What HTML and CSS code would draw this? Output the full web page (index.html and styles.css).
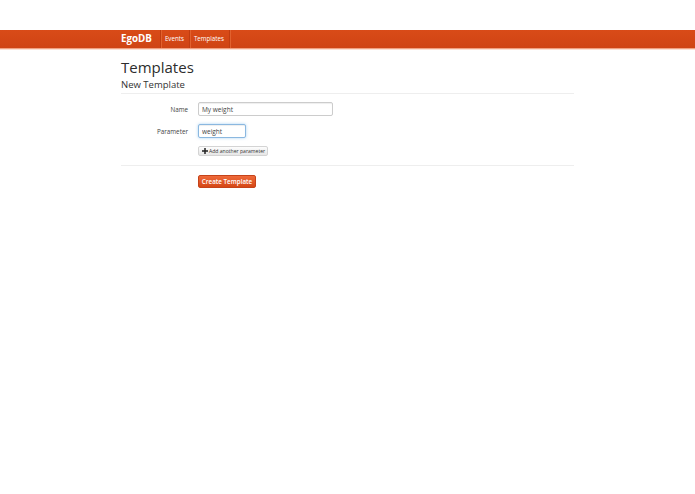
FILE: index.html
```html
<!DOCTYPE html>
<html>
<head>
<meta charset="utf-8">
<title>EgoDB</title>
<link rel="stylesheet" href="styles.css">
</head>
<body>
<div class="topspace"></div>
<div class="navbar">
  <div class="container nav-inner">
    <span class="brand">EgoDB</span>
    <ul class="nav">
      <li><span class="nav-link">Events</span></li>
      <li><span class="nav-link">Templates</span></li>
    </ul>
  </div>
</div>
<div class="container main">
  <h1 class="title">Templates</h1>
  <h2 class="subtitle">New Template</h2>
  <form class="form">
    <div class="row">
      <label class="label">Name</label>
      <div class="field"><input class="input input-wide" type="text" value="My weight"></div>
    </div>
    <div class="row">
      <label class="label">Parameter</label>
      <div class="field"><input class="input input-small focused" type="text" value="weight"></div>
    </div>
    <div class="row row-add">
      <span class="label"></span>
      <div class="field"><button type="button" class="btn-add"><svg class="plus" viewBox="0 0 8 8" width="6" height="6"><path d="M3 0h2v3h3v2H5v3H3V5H0V3h3z" fill="#222"/></svg>Add another parameter</button></div>
    </div>
    <div class="actions">
      <span class="label"></span>
      <button type="button" class="btn-primary">Create Template</button>
    </div>
  </form>
</div>
</body>
</html>
```
FILE: styles.css
```css
html, body {
  margin: 0;
  padding: 0;
  background: #fff;
  font-family: "Open Sans", "DejaVu Sans", sans-serif;
  color: #333;
}
.topspace {
  height: 30px;
}
.navbar {
  background: linear-gradient(#d94b18, #cf4414);
  height: 18px;
  border-bottom: 1px solid #f0a080;
  box-shadow: 0 1px 0 #fbe0d4;
}
.container {
  width: 453px;
  margin: 0 auto;
}
.nav-inner {
  display: flex;
  align-items: stretch;
  height: 18px;
}
.brand {
  color: #fff;
  font-weight: 700;
  font-size: 9.8px;
  line-height: 18px;
  padding-right: 8px;
}
.nav {
  list-style: none;
  margin: 0;
  padding: 0;
  display: flex;
  border-left: 1px solid #c03c10;
  box-shadow: inset 1px 0 0 #e2622f;
}
.nav li {
  display: flex;
  border-right: 1px solid #c03c10;
  box-shadow: 1px 0 0 #e2622f;
}
.nav-link {
  color: #fff;
  font-size: 6.2px;
  line-height: 18px;
  padding: 0 5px 0 4px;
}
.main {
  padding-top: 9px;
}
.title {
  margin: 0 0 3px;
  font-size: 15px;
  line-height: 18px;
  font-weight: 500;
  color: #2d2d2d;
}
.subtitle {
  margin: 0;
  font-size: 9.5px;
  font-weight: 500;
  line-height: 12px;
  padding-bottom: 2px;
  border-bottom: 1px solid #eee;
  color: #333;
}
.form {
  padding-top: 8px;
}
.row {
  display: flex;
  align-items: center;
  margin-bottom: 8px;
}
.row-add {
  margin-top: 3px;
  margin-bottom: 9px;
}
.field {
  display: flex;
  align-items: center;
}
.label {
  width: 67px;
  flex: none;
  text-align: right;
  font-size: 6.3px;
  line-height: 9px;
  color: #444;
  margin-right: 10px;
}
.input {
  box-sizing: border-box;
  height: 14px;
  border: 1px solid #ccc;
  border-radius: 2px;
  font-family: inherit;
  font-size: 6.5px;
  color: #444;
  padding: 0 3px;
  margin: 0;
  box-shadow: inset 0 1px 1px rgba(0,0,0,0.07);
  outline: none;
}
.input-wide {
  width: 135px;
}
.input-small {
  width: 48px;
}
.focused {
  border-color: #8bb8e0;
  box-shadow: inset 0 1px 1px rgba(0,0,0,0.07), 0 0 3px rgba(82,168,236,0.5);
}
.btn-add {
  box-sizing: border-box;
  display: flex;
  align-items: center;
  height: 10px;
  padding: 0 2px 0 3px;
  font-family: inherit;
  font-size: 5.1px;
  color: #333;
  background: linear-gradient(#fdfdfd, #e6e6e6);
  border: 1px solid #d4d4d4;
  border-radius: 2px;
  margin: 0;
}
.plus {
  margin-right: 1px;
}
.actions {
  display: flex;
  align-items: center;
  border-top: 1px solid #eee;
  padding-top: 9px;
}
.btn-primary {
  box-sizing: border-box;
  height: 13px;
  width: 58px;
  padding: 0;
  margin: 0;
  font-family: inherit;
  font-size: 6.3px;
  font-weight: 600;
  color: #fff;
  background: linear-gradient(#ef6a3a, #d54716);
  border: 1px solid #c5431a;
  border-radius: 2px;
}
```
